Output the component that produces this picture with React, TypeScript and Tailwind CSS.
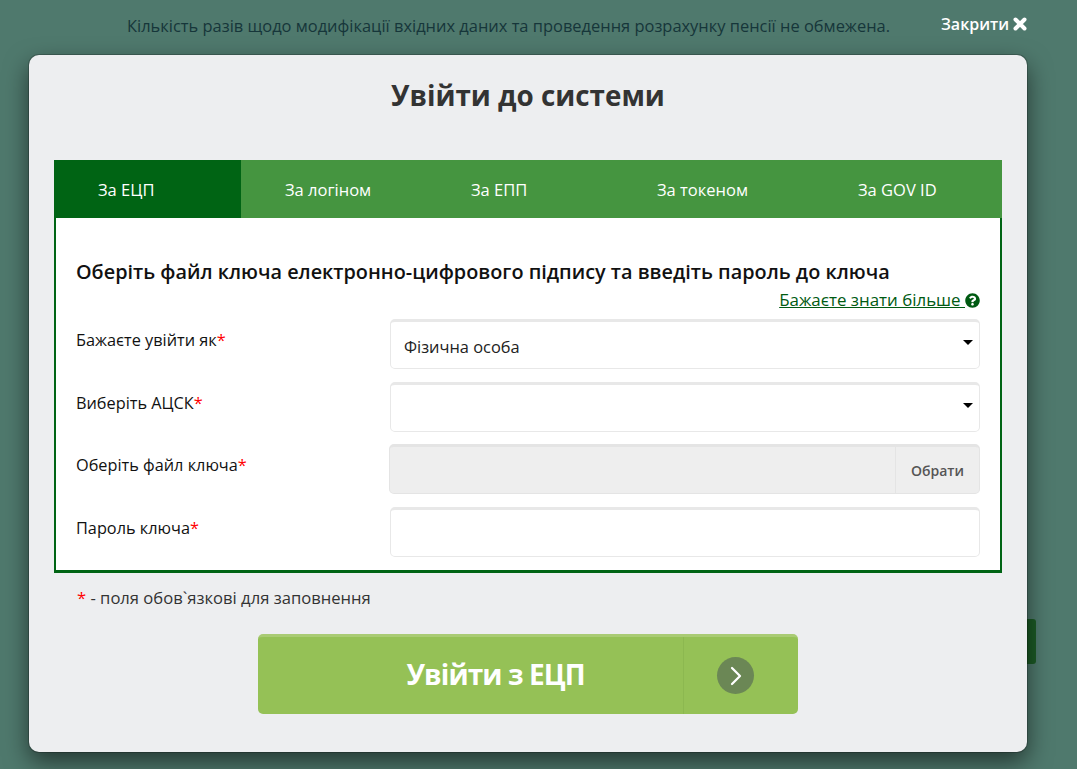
import React from 'react';
import { FaQuestionCircle } from 'react-icons/fa';
import { ChevronRight } from 'lucide-react';

const tabs = [
  { label: 'За ЕЦП', width: 'w-[187px]', active: true },
  { label: 'За логіном', width: 'w-[186px]', active: false },
  { label: 'За ЕПП', width: 'w-[186px]', active: false },
  { label: 'За токеном', width: 'w-[201px]', active: false },
  { label: 'За GOV ID', width: 'w-[188px]', active: false },
];

const Label = ({ text }: { text: string }) => (
  <div className="w-[314px] pt-[10px] text-[16.3px] leading-[22px] text-[#111]">
    {text}
    <span className="text-[#f00]">*</span>
  </div>
);

const Arrow = () => (
  <span className="absolute right-[6px] top-[18px] border-x-[5px] border-t-[5px] border-x-transparent border-t-black" />
);

const App: React.FC = () => {
  return (
    <div className="relative h-[769px] overflow-hidden bg-[#4f796d] font-['Open_Sans',sans-serif]">
      <div className="flex h-[55px]">
        <p className="ml-[127px] w-[814px] whitespace-nowrap pt-[15px] text-[16.45px] leading-[22px] text-[#16363a]">
          Кількість разів щодо модифікації вхідних даних та проведення розрахунку пенсії не обмежена.
        </p>
        <div className="mt-[13px] flex h-[22px] items-center gap-[4px] text-[16px] font-semibold text-white">
          Закрити
          <svg viewBox="0 0 14 14" className="h-[14px] w-[14px]" stroke="currentColor" strokeWidth="4" strokeLinecap="round">
            <path d="M2.5 2.5 11.5 11.5M11.5 2.5 2.5 11.5" />
          </svg>
        </div>
      </div>

      {/* thing behind the modal */}
      <div className="absolute left-[1020px] top-[619px] h-[45px] w-[16px] rounded-[3px] bg-[#1b5a25]" />

      <div className="relative ml-[29px] h-[697px] w-[998px] rounded-[10px] bg-[#edeef0] px-[25px] shadow-[0_10px_25px_rgba(0,0,0,0.55),0_0_0_1px_rgba(0,0,0,0.2)]">
        <h1 className="pt-[21px] text-center text-[27.8px] font-bold leading-[38px] text-[#333]">Увійти до системи</h1>

        <div className="mt-[46px] flex h-[58px] bg-[#459540]">
          {tabs.map((tab) => (
            <div
              key={tab.label}
              className={`${tab.width} flex items-center pl-[44px] pt-[2px] text-[16.5px] text-white ${tab.active ? 'bg-[#006414]' : ''}`}
            >
              {tab.label}
            </div>
          ))}
        </div>

        <div className="h-[355px] border-x-2 border-b-[3px] border-[#006414] bg-white px-[20px]">
          <h2 className="whitespace-nowrap pt-[41px] text-[19.85px] font-semibold leading-[26px] text-[#111]">
            Оберіть файл ключа електронно-цифрового підпису та введіть пароль до ключа
          </h2>
          <div className="mb-[4px] flex h-[30px] items-center justify-end text-[#005a12]">
            <a className="whitespace-pre text-[16.9px] leading-[22px] underline">Бажаєте знати більше </a>
            <FaQuestionCircle className="h-[15px] w-[15px]" />
          </div>

          <div className="flex flex-col gap-[12.5px]">
            <div className="flex">
              <Label text="Бажаєте увійти як" />
              <div className="relative flex h-[50px] w-[590px] items-center rounded-[5px] border border-t-[3px] border-[#e8e8e8] bg-white pl-[13px] pt-[4px] text-[16.4px] text-[#222]">
                Фізична особа
                <Arrow />
              </div>
            </div>
            <div className="flex">
              <Label text="Виберіть АЦСК" />
              <div className="relative h-[50px] w-[590px] rounded-[5px] border border-t-[3px] border-[#e8e8e8] bg-white">
                <Arrow />
              </div>
            </div>
            <div className="flex">
              <Label text="Оберіть файл ключа" />
              <div className="-ml-px flex h-[50px] w-[591px] justify-end rounded-[5px] border border-t-[3px] border-[#e4e4e4] bg-[#eeeeee]">
                <div className="flex w-[84px] items-center justify-center border-l border-[#e4e4e4] text-[14px] font-semibold text-[#555]">
                  Обрати
                </div>
              </div>
            </div>
            <div className="flex">
              <Label text="Пароль ключа" />
              <div className="h-[50px] w-[590px] rounded-[5px] border border-t-[3px] border-[#e8e8e8] bg-white" />
            </div>
          </div>
        </div>

        <p className="ml-[23px] mt-[14px] text-[16.6px] leading-[22px] text-[#333]">
          <span className="text-[#f00]">*</span> - поля обов`язкові для заповнення
        </p>

        <div className="ml-[204px] mt-[25px] flex h-[80px] w-[540px] rounded-[5px] border-t-[3px] border-[#a9cb74] bg-[#95c156]">
          <div className="flex w-[426px] items-center justify-center border-r border-[#8cb850] pb-[4px] pl-[50px] text-[28px] font-bold tracking-[-0.9px] text-white">
            Увійти з ЕЦП
          </div>
          <div className="flex flex-1 items-center justify-center pr-[12px]">
            <div className="flex h-[37px] w-[37px] items-center justify-center rounded-full bg-[#6b8755] text-white">
              <ChevronRight className="ml-[2px] h-[32px] w-[32px] shrink-0" strokeWidth={1.7} />
            </div>
          </div>
        </div>
      </div>
    </div>
  );
};

export default App;
